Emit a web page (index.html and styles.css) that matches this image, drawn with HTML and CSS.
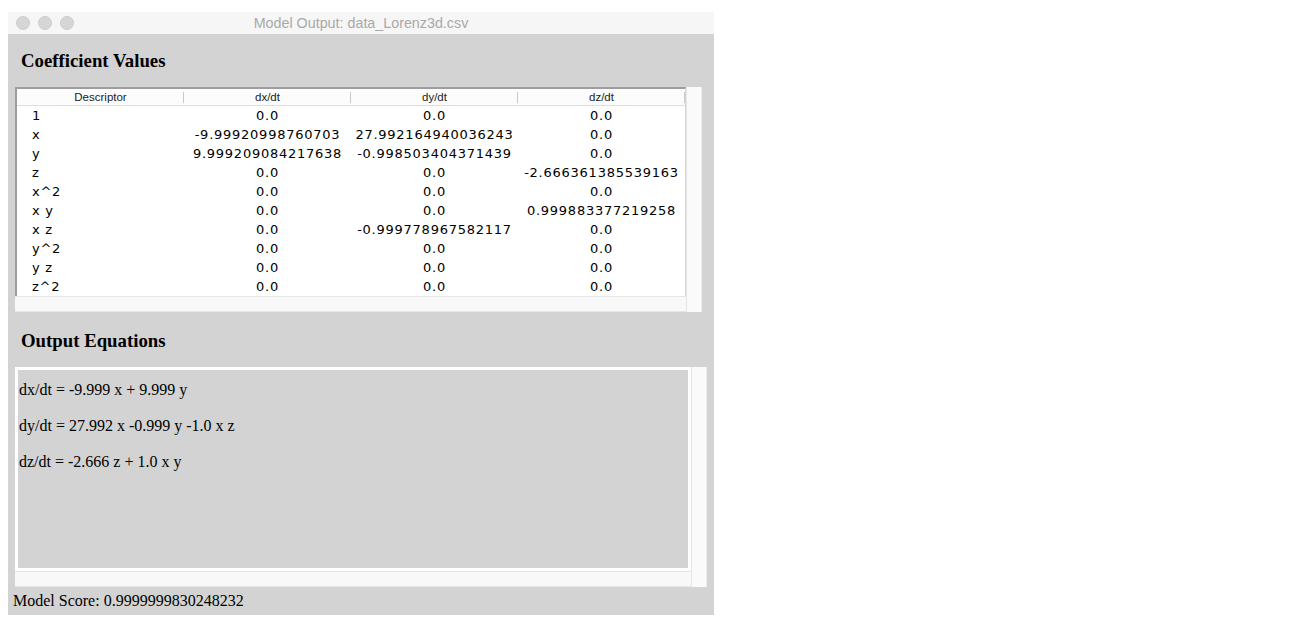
FILE: index.html
```html
<!DOCTYPE html>
<html>
<head>
<meta charset="utf-8">
<title>Model Output</title>
<link rel="stylesheet" href="styles.css">
</head>
<body>
<div class="window">
  <div class="titlebar">
    <div class="lights"><span class="light"></span><span class="light"></span><span class="light"></span></div>
    <div class="title">Model Output: data_Lorenz3d.csv</div>
    <div></div>
  </div>
  <h2 class="heading first">Coefficient Values</h2>
  <div class="coef">
    <div class="table">
      <div class="row head">
        <div class="cell desc">Descriptor</div>
        <div class="cell">dx/dt</div>
        <div class="cell">dy/dt</div>
        <div class="cell">dz/dt</div>
      </div>
      <div class="row"><div class="cell desc">1</div><div class="cell">0.0</div><div class="cell">0.0</div><div class="cell">0.0</div></div>
      <div class="row"><div class="cell desc">x</div><div class="cell">-9.99920998760703</div><div class="cell">27.992164940036243</div><div class="cell">0.0</div></div>
      <div class="row"><div class="cell desc">y</div><div class="cell">9.999209084217638</div><div class="cell">-0.998503404371439</div><div class="cell">0.0</div></div>
      <div class="row"><div class="cell desc">z</div><div class="cell">0.0</div><div class="cell">0.0</div><div class="cell">-2.666361385539163</div></div>
      <div class="row"><div class="cell desc">x^2</div><div class="cell">0.0</div><div class="cell">0.0</div><div class="cell">0.0</div></div>
      <div class="row"><div class="cell desc">x y</div><div class="cell">0.0</div><div class="cell">0.0</div><div class="cell">0.999883377219258</div></div>
      <div class="row"><div class="cell desc">x z</div><div class="cell">0.0</div><div class="cell">-0.999778967582117</div><div class="cell">0.0</div></div>
      <div class="row"><div class="cell desc">y^2</div><div class="cell">0.0</div><div class="cell">0.0</div><div class="cell">0.0</div></div>
      <div class="row"><div class="cell desc">y z</div><div class="cell">0.0</div><div class="cell">0.0</div><div class="cell">0.0</div></div>
      <div class="row"><div class="cell desc">z^2</div><div class="cell">0.0</div><div class="cell">0.0</div><div class="cell">0.0</div></div>
    </div>
    <div class="vscroll"></div>
    <div class="hscroll"></div>
  </div>
  <h2 class="heading second">Output Equations</h2>
  <div class="eqbox">
    <div class="eqpanel">
      <p>dx/dt = -9.999 x + 9.999 y</p>
      <p>dy/dt = 27.992 x -0.999 y -1.0 x z</p>
      <p>dz/dt = -2.666 z + 1.0 x y</p>
    </div>
    <div class="vscroll"></div>
    <div class="hscroll"></div>
  </div>
  <div class="score">Model Score: 0.9999999830248232</div>
</div>
</body>
</html>
```

FILE: styles.css
```css
html, body {
  margin: 0;
  padding: 0;
  background: #ffffff;
}

.window {
  margin: 12px 0 0 8px;
  width: 706px;
  height: 603px;
  background: #d3d3d3;
  display: flex;
  flex-direction: column;
  font-family: "Liberation Serif", "Times New Roman", serif;
  color: #000;
}

.titlebar {
  height: 22px;
  flex: none;
  background: #f6f6f6;
  display: grid;
  grid-template-columns: 1fr auto 1fr;
  align-items: center;
}

.lights {
  display: flex;
  gap: 8px;
  padding-left: 8px;
}

.light {
  width: 12px;
  height: 12px;
  border-radius: 50%;
  background: #d6d6d6;
  border: 0.5px solid #cdcdcd;
}

.title {
  font-family: "Liberation Sans", Arial, sans-serif;
  font-size: 14.3px;
  color: #a9a9a9;
  line-height: 22px;
}

.heading {
  margin: 0 0 0 13px;
  font-size: 18.8px;
  font-weight: bold;
  line-height: 22px;
}

.heading.first {
  margin-top: 16px;
  margin-bottom: 15px;
}

.heading.second {
  margin-top: 18px;
  margin-bottom: 15px;
}

.coef {
  margin-left: 7px;
  width: 687px;
  display: grid;
  grid-template-columns: 671px 16px;
  grid-template-rows: 209px 16px;
  flex: none;
}

.table {
  background: #ffffff;
  border-top: 2px solid #9d9d9d;
  border-left: 2px solid #9d9d9d;
  border-right: 1px solid #d6d6d6;
  overflow: hidden;
}

.row {
  display: grid;
  grid-template-columns: 167px 167px 167px 167px;
  height: 19px;
  align-items: center;
  font-family: "DejaVu Sans", Verdana, sans-serif;
  font-size: 13px;
  letter-spacing: 0.75px;
}

.row.head {
  height: 16px;
  border-bottom: 1px solid #dedede;
  background: #fcfcfc;
  font-family: "Liberation Sans", Arial, sans-serif;
  font-size: 11.5px;
  letter-spacing: 0;
  color: #222;
}

.row.head .cell {
  background: linear-gradient(#c9c9c9, #c9c9c9) right center / 1px 11px no-repeat;
}

.cell {
  padding: 0 4px;
  text-align: center;
  white-space: nowrap;
  overflow: hidden;
  line-height: 19px;
}

.row.head .cell {
  line-height: 16px;
}

.cell.desc {
  text-align: left;
  padding-left: 15px;
}

.row.head .cell.desc {
  text-align: center;
  padding-left: 4px;
}

.vscroll {
  grid-column: 2;
  grid-row: 1 / 3;
  background: #fafafa;
  border-left: 1px solid #e6e6e6;
  border-right: 1px solid #ececec;
}

.hscroll {
  grid-column: 1;
  grid-row: 2;
  background: #f8f8f8;
  border-top: 1px solid #e6e6e6;
  border-bottom: 1px solid #e6e6e6;
}

.eqbox {
  margin-left: 7px;
  width: 692px;
  display: grid;
  grid-template-columns: 676px 16px;
  grid-template-rows: 204px 16px;
  flex: none;
}

.eqpanel {
  border: 3px solid #ffffff;
  background: #d3d3d3;
  padding: 10px 0 0 1px;
  font-size: 16px;
  line-height: 20px;
}

.eqpanel p {
  margin: 0 0 16px 0;
}

.score {
  margin: 5px 0 0 5px;
  font-size: 16px;
  line-height: 18px;
}
```
